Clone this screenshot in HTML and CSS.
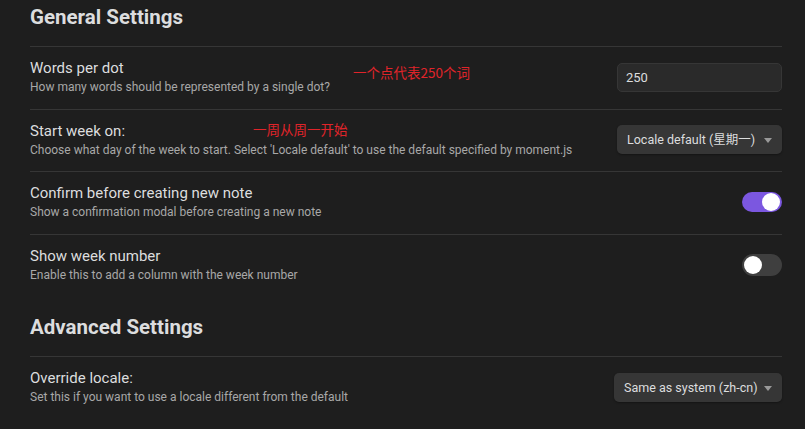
FILE: index.html
```html
<!DOCTYPE html>
<html lang="en">
<head>
<meta charset="utf-8">
<title>Settings</title>
<link rel="stylesheet" href="styles.css">
</head>
<body>
<div class="settings">
  <div class="heading heading-first">General Settings</div>

  <div class="item">
    <div class="info">
      <div class="name">Words per dot</div>
      <div class="desc">How many words should be represented by a single dot?</div>
    </div>
    <div class="control">
      <div class="text-input">250</div>
    </div>
    <span class="note note-words">一个点代表250个词</span>
  </div>

  <div class="item">
    <div class="info">
      <div class="name">Start week on:</div>
      <div class="desc">Choose what day of the week to start. Select 'Locale default' to use the default specified by moment.js</div>
    </div>
    <div class="control">
      <div class="dropdown dropdown-week">Locale default (星期一)<span class="caret"></span></div>
    </div>
    <span class="note note-week">一周从周一开始</span>
  </div>

  <div class="item">
    <div class="info">
      <div class="name">Confirm before creating new note</div>
      <div class="desc">Show a confirmation modal before creating a new note</div>
    </div>
    <div class="control">
      <div class="toggle toggle-on"><span class="knob"></span></div>
    </div>
  </div>

  <div class="item">
    <div class="info">
      <div class="name">Show week number</div>
      <div class="desc">Enable this to add a column with the week number</div>
    </div>
    <div class="control">
      <div class="toggle"><span class="knob"></span></div>
    </div>
  </div>

  <div class="heading">Advanced Settings</div>

  <div class="item">
    <div class="info">
      <div class="name">Override locale:</div>
      <div class="desc">Set this if you want to use a locale different from the default</div>
    </div>
    <div class="control">
      <div class="dropdown dropdown-locale">Same as system (zh-cn)<span class="caret"></span></div>
    </div>
  </div>
</div>
</body>
</html>
```
FILE: styles.css
```css
html, body {
  margin: 0;
  padding: 0;
  background: #1e1e1e;
  overflow: hidden;
}

body {
  font-family: Roboto, "Noto Sans CJK SC", sans-serif;
  color: #dcddde;
}

.settings {
  padding: 0 23px 0 30px;
  display: flex;
  flex-direction: column;
}

.heading {
  font-size: 20.5px;
  font-weight: 700;
  line-height: 24px;
  color: #dcddde;
  padding: 19px 0 17px;
}

.heading-first {
  padding-top: 5px;
}

.item {
  position: relative;
  display: flex;
  align-items: center;
  gap: 20px;
  border-top: 1px solid #363636;
  padding: 11px 0 12px;
  height: 38.5px;
}

.info {
  flex: 1;
  min-width: 0;
  display: flex;
  flex-direction: column;
}

.name {
  font-size: 15px;
  line-height: 20px;
  color: #dcddde;
  white-space: nowrap;
}

.desc {
  font-size: 12px;
  line-height: 18px;
  color: #a8a8a8;
  white-space: nowrap;
}

.control {
  display: flex;
  align-items: center;
  justify-content: flex-end;
}

.text-input {
  box-sizing: border-box;
  width: 165px;
  height: 29px;
  background: #2a2a2a;
  border: 1px solid #363636;
  border-radius: 5px;
  padding: 0 8px;
  font-size: 13px;
  line-height: 27px;
  color: #dcddde;
}

.dropdown {
  box-sizing: border-box;
  height: 29px;
  background: #363636;
  border-radius: 5px;
  box-shadow: 0 1px 2px rgba(0, 0, 0, 0.35);
  padding: 0 24px 0 10px;
  font-size: 12.5px;
  line-height: 29px;
  color: #dcddde;
  position: relative;
  white-space: nowrap;
}

.dropdown-week {
  width: 165px;
}

.dropdown-locale {
  width: 168px;
}

.caret {
  position: absolute;
  right: 10px;
  top: 13px;
  width: 0;
  height: 0;
  border-left: 4.5px solid transparent;
  border-right: 4.5px solid transparent;
  border-top: 5px solid #999999;
}

.toggle {
  position: relative;
  width: 40px;
  height: 22px;
  border-radius: 11px;
  background: #3f3f3f;
}

.toggle .knob {
  position: absolute;
  left: 2px;
  top: 2px;
  width: 18px;
  height: 18px;
  border-radius: 50%;
  background: #ffffff;
}

.toggle-on {
  background: #7b57e0;
  height: 20px;
  border-radius: 10px;
}

.toggle-on .knob {
  left: auto;
  right: 2px;
  top: 1px;
}

.note {
  position: absolute;
  font-family: "Noto Sans CJK SC", Roboto, sans-serif;
  font-size: 13.5px;
  line-height: 15px;
  color: #e0242a;
  white-space: nowrap;
}

.note-words {
  left: 323px;
  top: 18px;
}

.note-week {
  left: 223px;
  top: 12px;
}
```
